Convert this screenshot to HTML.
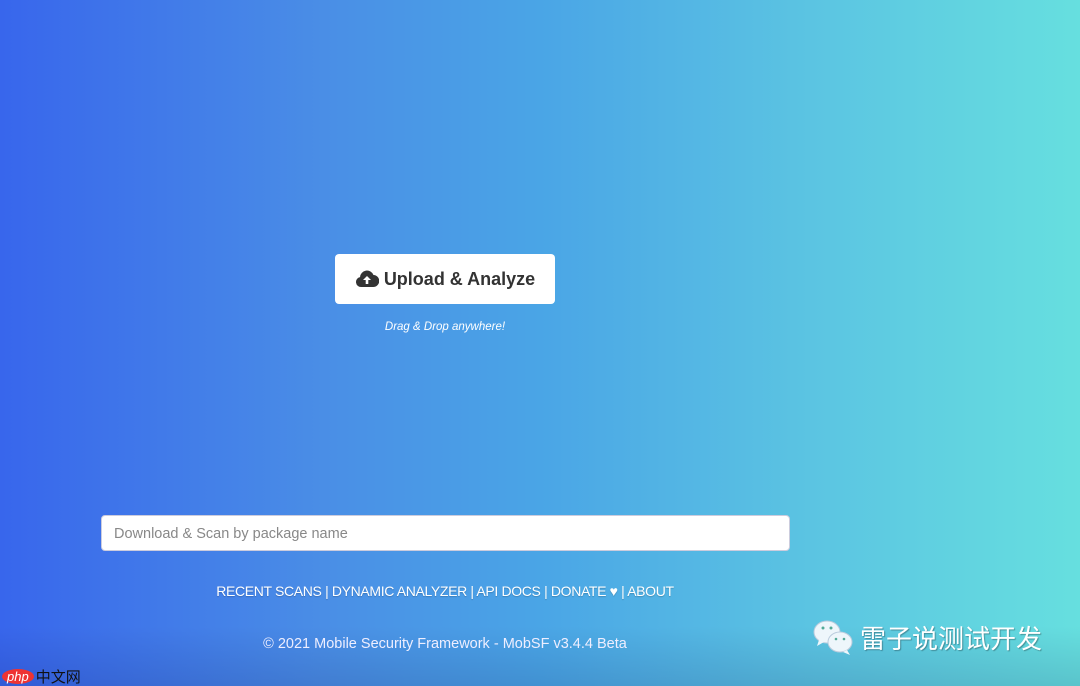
<!DOCTYPE html>
<html><head><meta charset="utf-8"><style>
html,body{margin:0;padding:0;width:1080px;height:686px;overflow:hidden}
body{background:linear-gradient(90deg,#3866ec 0%,#4a8ee6 30%,#4aa5e6 50%,#5bc4e2 75%,#66dfdf 100%);font-family:"Liberation Sans",sans-serif;position:relative}
.shade{position:absolute;left:0;right:0;bottom:0;height:60px;background:linear-gradient(180deg,rgba(0,0,60,0),rgba(0,0,60,0.12))}
.btn{position:absolute;left:335px;top:254px;width:220px;height:50px;background:#fff;border-radius:4px;display:flex;align-items:center;justify-content:center;font-weight:bold;font-size:18px;color:#333}
.btn svg{margin-right:5px}
.dd{position:absolute;left:335px;width:220px;top:321px;text-align:center;color:#fff;font-style:italic;font-size:11.5px}
.inp{position:absolute;left:101px;top:515px;height:36px;background:#fff;border:1px solid #ccd;border-radius:4px;box-sizing:border-box;padding-left:12px;line-height:36px;color:#888;font-size:14.5px;width:689px}
.nav{position:absolute;left:0;width:890px;top:583px;text-align:center;color:#fff;font-size:14px;letter-spacing:-0.35px;text-shadow:0 1px 1px rgba(0,0,0,.2)}
.copy{position:absolute;left:0;width:890px;top:636px;text-align:center;color:#eef;font-size:14.5px}
.wx{position:absolute;left:812px;top:618px;display:flex;align-items:center;color:#fff;font-family:"Noto Sans CJK SC",sans-serif;font-size:26px;text-shadow:1px 1px 1px rgba(0,0,0,.3)}
.php{position:absolute;left:2px;top:666px;display:flex;align-items:center;font-size:15px}
</style></head><body>
<div class="shade"></div>
<div class="btn"><svg width="24" height="20" viewBox="0 0 24 20"><path d="M6 18a5 5 0 0 1-1-9.9A7 7 0 0 1 18.5 6 5.5 5.5 0 0 1 18 18z" fill="#333"/><path d="M12 7l-4 4h2.7v4h2.6v-4H16z" fill="#fff"/></svg>Upload &amp; Analyze</div>
<div class="dd">Drag &amp; Drop anywhere!</div>
<div class="inp">Download &amp; Scan by package name</div>
<div class="nav">RECENT SCANS | DYNAMIC ANALYZER | API DOCS | DONATE ♥ | ABOUT</div>
<div class="copy">© 2021 Mobile Security Framework - MobSF v3.4.4 Beta</div>
<div class="wx"><svg width="44" height="38" viewBox="0 0 44 38"><ellipse cx="15" cy="14" rx="13" ry="11" fill="#eef6fb" stroke="#bcd" /><path d="M7 22l-2 6 7-4z" fill="#eef6fb"/><ellipse cx="28" cy="24" rx="12" ry="10" fill="#eef6fb" stroke="#bcd"/><path d="M35 32l3 5-7-3z" fill="#eef6fb"/><circle cx="11" cy="10" r="1.5" fill="#5a9"/><circle cx="19" cy="10" r="1.5" fill="#5a9"/><circle cx="24" cy="21" r="1.3" fill="#5a9"/><circle cx="32" cy="21" r="1.3" fill="#5a9"/></svg><span style="margin-left:4px">雷子说测试开发</span></div>
<div class="php"><span style="background:#e33;color:#fff;border-radius:50%;padding:0 5px;font-style:italic;font-size:13px">php</span><span style="color:#111;font-family:'Noto Sans CJK SC',sans-serif;margin-left:2px">中文网</span></div>
</body></html>
